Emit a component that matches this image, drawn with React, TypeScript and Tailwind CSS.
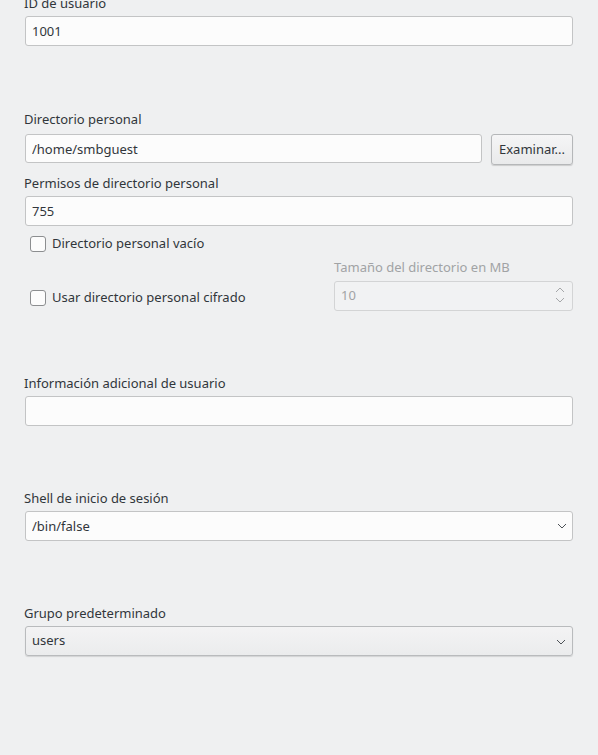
import React from "react";

const inputCls =
  "h-[30px] w-full rounded-[3px] border border-[#c3c4c5] bg-[#fcfcfc] px-[6px] text-[13px] text-[#31363b] outline-none";

function Label({ children, className = "" }: { children: React.ReactNode; className?: string }) {
  return <div className={`h-[18px] leading-[18px] ${className}`}>{children}</div>;
}

function Chevron({ className = "" }: { className?: string }) {
  return (
    <svg width="10" height="6" viewBox="0 0 10 6" className={className}>
      <path d="M1 1 L5 5 L9 1" fill="none" stroke="currentColor" strokeWidth="1" />
    </svg>
  );
}

function Checkbox({ label }: { label: string }) {
  return (
    <label className="flex items-center gap-[6px] pl-[5px]">
      <span className="h-[16px] w-[16px] rounded-[3px] border border-[#8c8e90] bg-[#fcfcfc]" />
      <span>{label}</span>
    </label>
  );
}

export default function App() {
  return (
    <div
      className="h-[755px] w-[598px] overflow-hidden bg-[#eff0f1] pl-[24px] pr-[25px] text-[13px] text-[#31363b]"
      style={{ fontFamily: '"Noto Sans", "DejaVu Sans", sans-serif' }}
    >
      {/* ID */}
      <Label className="-mt-[6px] mb-[4px]">ID de usuario</Label>
      <div className="pl-[1px]">
        <input className={inputCls} defaultValue="1001" readOnly />
      </div>

      {/* Home dir */}
      <Label className="mt-[64px] mb-[6px]">Directorio personal</Label>
      <div className="flex items-start pl-[1px]">
        <input className={`${inputCls} !h-[29px] flex-1`} defaultValue="/home/smbguest" readOnly />
        <button className="ml-[9px] h-[31px] w-[82px] shrink-0 rounded-[3px] border border-[#b5b7b9] bg-gradient-to-b from-[#f5f5f6] to-[#e9eaeb] text-[13px] text-[#31363b] shadow-[0_1px_1px_rgba(0,0,0,0.15)]">
          Examinar...
        </button>
      </div>

      <Label className="mt-[9px] mb-[4px]">Permisos de directorio personal</Label>
      <div className="pl-[1px]">
        <input className={inputCls} defaultValue="755" readOnly />
      </div>

      {/* checkboxes + size */}
      <div className="mt-[8px] grid grid-cols-[309px_1fr] pl-[1px]">
        <div className="col-start-1 h-[18px]">
          <Checkbox label="Directorio personal vacío" />
        </div>
        <div />
        <div />
        <div className="mt-[6px] mb-[5px] h-[18px] leading-[18px] text-[#a1a3a5]">
          Tamaño del directorio en MB
        </div>
        <div className="flex items-center pt-[4px]">
          <Checkbox label="Usar directorio personal cifrado" />
        </div>
        <div className="relative">
          <div className="flex h-[30px] w-full items-center rounded-[3px] border border-[#d3d4d5] bg-[#f1f2f3] px-[6px] text-[#a1a3a5]">
            10
          </div>
          <div className="absolute right-[8px] top-[6px] flex flex-col gap-[4px] text-[#a5a7a9]">
            <Chevron className="rotate-180" />
            <Chevron />
          </div>
        </div>
      </div>

      {/* extra info */}
      <Label className="mt-[63px] mb-[4px]">Información adicional de usuario</Label>
      <div className="pl-[1px]">
        <input className={inputCls} readOnly />
      </div>

      {/* shell */}
      <Label className="mt-[63px] mb-[4px]">Shell de inicio de sesión</Label>
      <div className="relative pl-[1px]">
        <input className={inputCls} defaultValue="/bin/false" readOnly />
        <Chevron className="absolute right-[6px] top-[12px] text-[#4d5257]" />
      </div>

      {/* group */}
      <Label className="mt-[63px] mb-[4px]">Grupo predeterminado</Label>
      <div className="pl-[1px]">
        <div className="relative flex h-[30px] w-full items-center rounded-[3px] border border-[#b9bbbd] bg-gradient-to-b from-[#f3f3f4] to-[#ebeced] px-[6px] shadow-[0_1px_1px_rgba(0,0,0,0.12)]">
          users
          <Chevron className="absolute right-[6px] top-[12px] text-[#4d5257]" />
        </div>
      </div>
    </div>
  );
}
